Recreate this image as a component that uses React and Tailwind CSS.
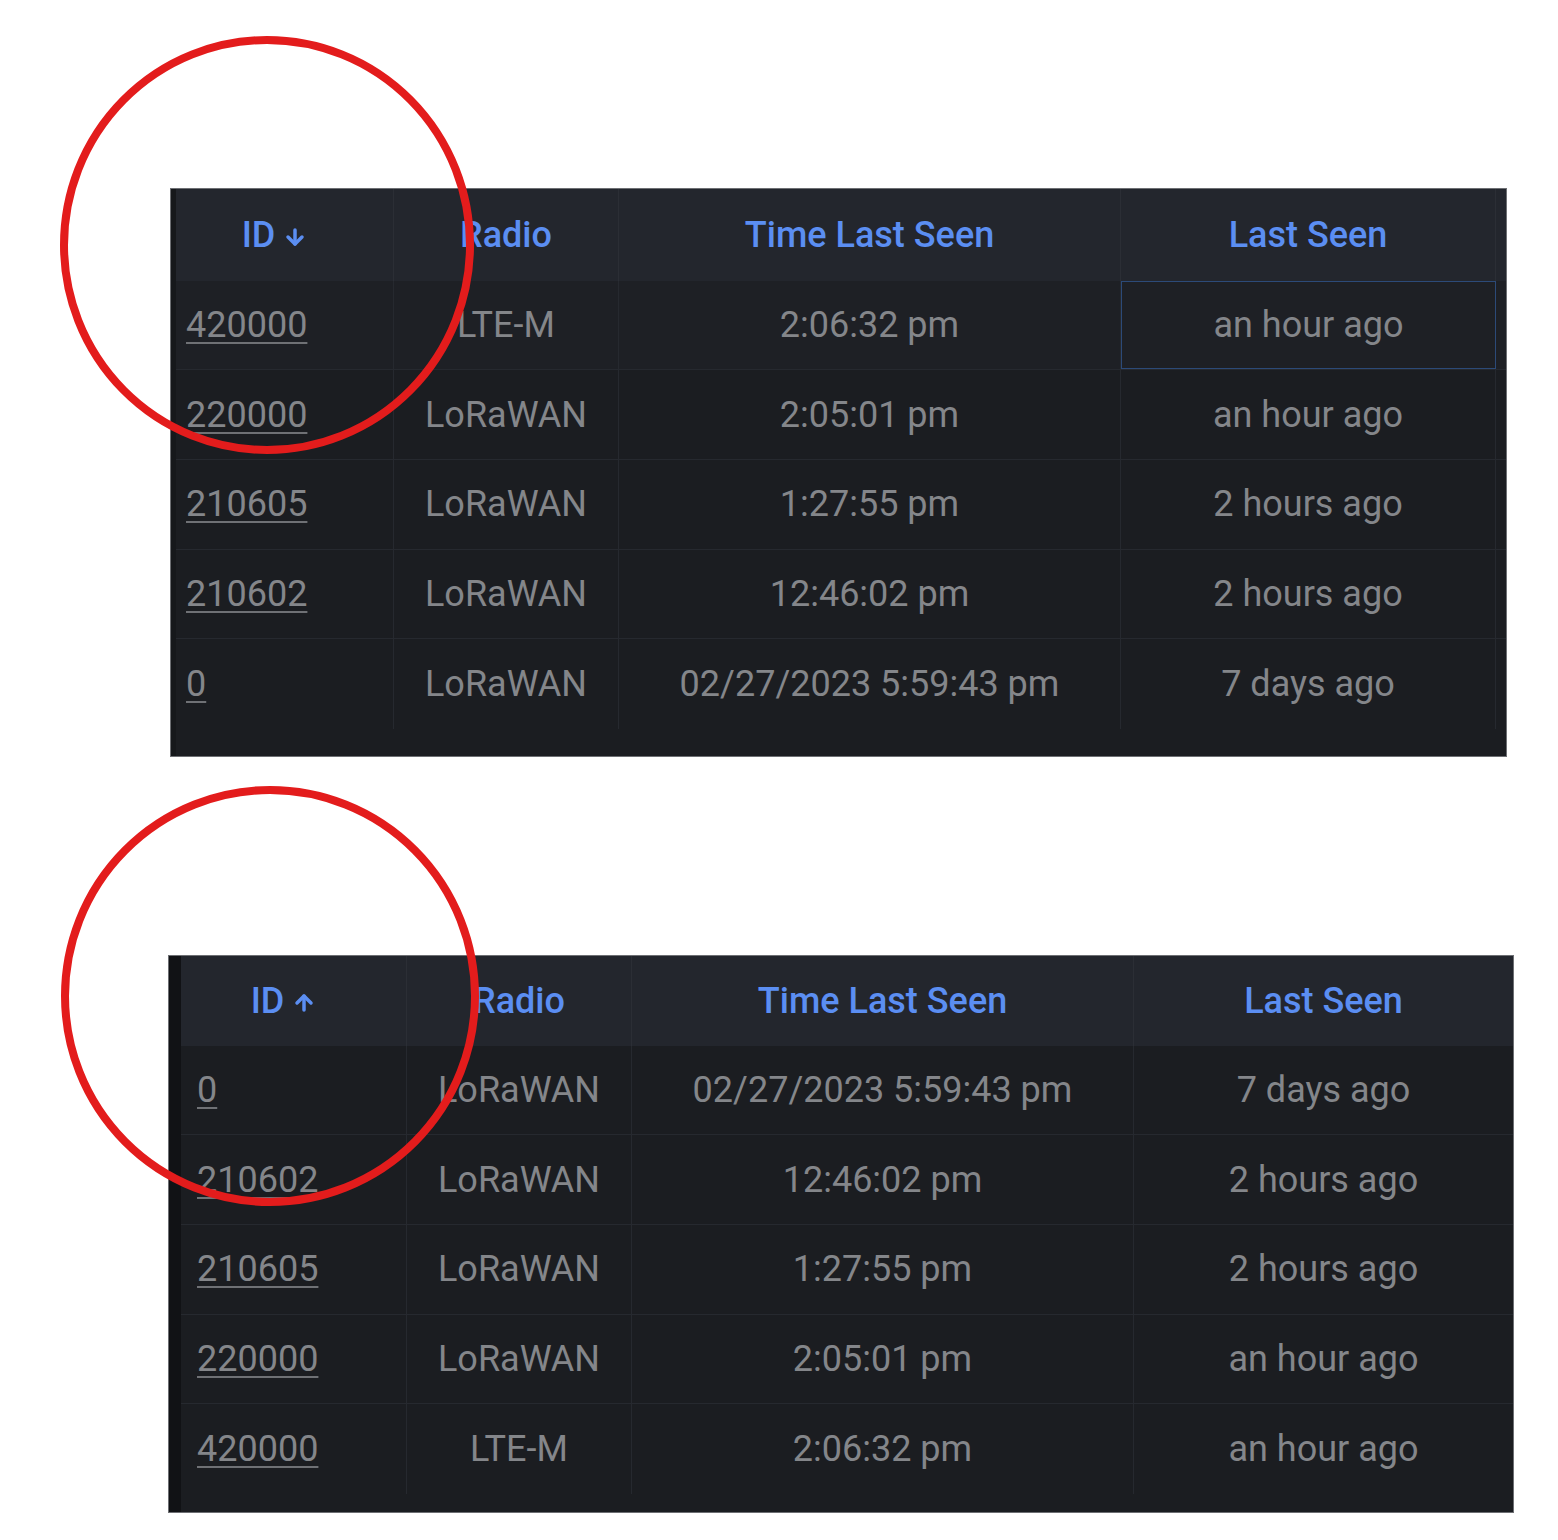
import { ArrowDown, ArrowUp } from 'lucide-react';

const rowsDesc = [
  { id: '420000', radio: 'LTE-M', time: '2:06:32 pm', seen: 'an hour ago' },
  { id: '220000', radio: 'LoRaWAN', time: '2:05:01 pm', seen: 'an hour ago' },
  { id: '210605', radio: 'LoRaWAN', time: '1:27:55 pm', seen: '2 hours ago' },
  { id: '210602', radio: 'LoRaWAN', time: '12:46:02 pm', seen: '2 hours ago' },
  { id: '0', radio: 'LoRaWAN', time: '02/27/2023 5:59:43 pm', seen: '7 days ago' },
];

const rowsAsc = [...rowsDesc].reverse();

// column widths and sizes for each of the two screenshots
const topLayout = {
  box: 'w-[1337px] h-[569px]',
  strip: 'w-[5px] bg-[#16181b]',
  body: 'pb-[27px]',
  head: 'h-[92px]',
  cols: ['w-[218px]', 'w-[225px]', 'w-[502px]', 'w-[375px]'],
  idPad: 'pl-[10px]',
};

const bottomLayout = {
  box: 'w-[1346px] h-[558px]',
  strip: 'w-[14px] bg-[#111215]',
  body: 'pb-[18px]',
  head: 'h-[90px]',
  cols: ['w-[226px]', 'w-[225px]', 'w-[502px]', 'w-[379px]'],
  idPad: 'pl-[16px]',
};

const DeviceTable = ({ rows, desc, layout, lastDivider, focusFirst }) => {
  const { box, strip, body, head, cols, idPad } = layout;
  const Arrow = desc ? ArrowDown : ArrowUp;

  return (
    <div className={`flex bg-[#1b1d21] border border-[#6d6f73] ${box}`}>
      <div className={strip}></div>
      <div className={`flex-1 flex flex-col ${body}`}>
        <div className={`flex bg-[#23262d] font-medium text-[#5b8ef2] ${head}`}>
          <div className={`flex items-center justify-center gap-2 pr-5 border-r border-[#2b2e35] ${cols[0]}`}>
            <span>ID</span>
            <Arrow size={24} strokeWidth={3.5} className="mt-1" />
          </div>
          <div className={`flex items-center justify-center border-r border-[#2b2e35] ${cols[1]}`}>Radio</div>
          <div className={`flex items-center justify-center border-r border-[#2b2e35] ${cols[2]}`}>Time Last Seen</div>
          <div className={`flex items-center justify-center ${lastDivider ? 'border-r border-[#2b2e35]' : ''} ${cols[3]}`}>Last Seen</div>
        </div>
        {rows.map((r, i) => (
          <div
            key={r.id}
            className={`flex h-[90px] text-[#84868a] ${i < rows.length - 1 ? 'border-b border-[#26292f]' : ''} ${focusFirst && i === 0 ? 'bg-[#1e2025]' : ''}`}
          >
            <div className={`flex items-center border-r border-[#26292f] ${idPad} ${cols[0]}`}>
              <span className="underline underline-offset-[5px] decoration-2 decoration-[#6f7175]">{r.id}</span>
            </div>
            <div className={`flex items-center justify-center border-r border-[#26292f] ${cols[1]}`}>{r.radio}</div>
            <div className={`flex items-center justify-center border-r border-[#26292f] ${cols[2]}`}>{r.time}</div>
            <div
              className={`flex items-center justify-center ${cols[3]} ${focusFirst && i === 0 ? 'border border-[#2c4a78]' : lastDivider ? 'border-r border-[#26292f]' : ''}`}
            >
              {r.seen}
            </div>
          </div>
        ))}
      </div>
    </div>
  );
};

export default function App() {
  return (
    <div className="relative w-[1558px] h-[1540px] bg-white overflow-hidden font-['Roboto',sans-serif] text-[36px] leading-none">
      <div className="pt-[188px] pl-[170px]">
        <DeviceTable rows={rowsDesc} desc layout={topLayout} lastDivider focusFirst />
      </div>
      <div className="pt-[198px] pl-[168px]">
        <DeviceTable rows={rowsAsc} layout={bottomLayout} />
      </div>
      {/* red annotation circles drawn over the screenshot */}
      <svg className="absolute left-0 top-0 pointer-events-none" width="1558" height="1540">
        <ellipse cx="267" cy="245" rx="203" ry="205" fill="none" stroke="#e31c1c" strokeWidth="8" />
        <ellipse cx="270" cy="996" rx="205" ry="206" fill="none" stroke="#e31c1c" strokeWidth="8" />
      </svg>
    </div>
  );
}
